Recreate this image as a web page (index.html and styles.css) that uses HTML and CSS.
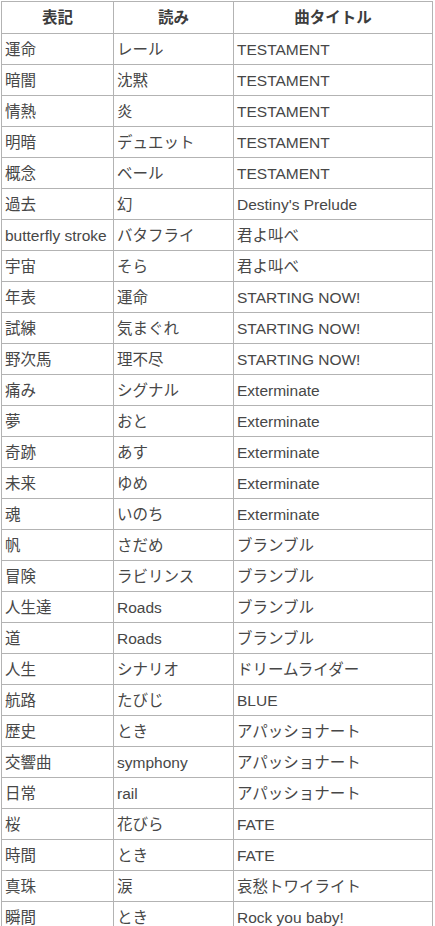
FILE: index.html
```html
<!DOCTYPE html>
<html lang="ja">
<head>
<meta charset="utf-8">
<title>表記と読み</title>
<link rel="stylesheet" href="styles.css">
</head>
<body>
<table class="lyrics">
  <thead>
    <tr><th class="c1">表記</th><th class="c2">読み</th><th class="c3">曲タイトル</th></tr>
  </thead>
  <tbody>
    <tr><td>運命</td><td>レール</td><td>TESTAMENT</td></tr>
    <tr><td>暗闇</td><td>沈黙</td><td>TESTAMENT</td></tr>
    <tr><td>情熱</td><td>炎</td><td>TESTAMENT</td></tr>
    <tr><td>明暗</td><td>デュエット</td><td>TESTAMENT</td></tr>
    <tr><td>概念</td><td>ベール</td><td>TESTAMENT</td></tr>
    <tr><td>過去</td><td>幻</td><td>Destiny's Prelude</td></tr>
    <tr><td>butterfly stroke</td><td>バタフライ</td><td>君よ叫べ</td></tr>
    <tr><td>宇宙</td><td>そら</td><td>君よ叫べ</td></tr>
    <tr><td>年表</td><td>運命</td><td>STARTING NOW!</td></tr>
    <tr><td>試練</td><td>気まぐれ</td><td>STARTING NOW!</td></tr>
    <tr><td>野次馬</td><td>理不尽</td><td>STARTING NOW!</td></tr>
    <tr><td>痛み</td><td>シグナル</td><td>Exterminate</td></tr>
    <tr><td>夢</td><td>おと</td><td>Exterminate</td></tr>
    <tr><td>奇跡</td><td>あす</td><td>Exterminate</td></tr>
    <tr><td>未来</td><td>ゆめ</td><td>Exterminate</td></tr>
    <tr><td>魂</td><td>いのち</td><td>Exterminate</td></tr>
    <tr><td>帆</td><td>さだめ</td><td>ブランブル</td></tr>
    <tr><td>冒険</td><td>ラビリンス</td><td>ブランブル</td></tr>
    <tr><td>人生達</td><td>Roads</td><td>ブランブル</td></tr>
    <tr><td>道</td><td>Roads</td><td>ブランブル</td></tr>
    <tr><td>人生</td><td>シナリオ</td><td>ドリームライダー</td></tr>
    <tr><td>航路</td><td>たびじ</td><td>BLUE</td></tr>
    <tr><td>歴史</td><td>とき</td><td>アパッショナート</td></tr>
    <tr><td>交響曲</td><td>symphony</td><td>アパッショナート</td></tr>
    <tr><td>日常</td><td>rail</td><td>アパッショナート</td></tr>
    <tr><td>桜</td><td>花びら</td><td>FATE</td></tr>
    <tr><td>時間</td><td>とき</td><td>FATE</td></tr>
    <tr><td>真珠</td><td>涙</td><td>哀愁トワイライト</td></tr>
    <tr><td>瞬間</td><td>とき</td><td>Rock you baby!</td></tr>
  </tbody>
</table>
</body>
</html>
```
FILE: styles.css
```css
html, body {
  margin: 0;
  padding: 0;
  background: #ffffff;
}

.lyrics {
  margin: 1px 0 0 1px;
  width: 432px;
  table-layout: fixed;
  border-collapse: separate;
  border-spacing: 0;
  border-top: 1px solid #b3b3b3;
  border-left: 1px solid #b3b3b3;
  font-family: "Liberation Sans", Arial, "Noto Sans CJK JP", sans-serif;
  font-size: 15.5px;
  line-height: 20px;
  color: #474747;
}

.lyrics th,
.lyrics td {
  box-sizing: border-box;
  border-right: 1px solid #b3b3b3;
  border-bottom: 1px solid #b3b3b3;
  padding: 1px 0 0 3px;
  vertical-align: middle;
  white-space: nowrap;
  overflow: hidden;
  text-align: left;
}

.lyrics th {
  height: 32px;
  font-weight: bold;
  color: #3d3d3d;
  text-align: center;
  padding: 1px 0 0 0;
}

.lyrics td {
  height: 31px;
}

.c1 { width: 112px; }
.c2 { width: 120px; }
.c3 { width: 199px; }
```
